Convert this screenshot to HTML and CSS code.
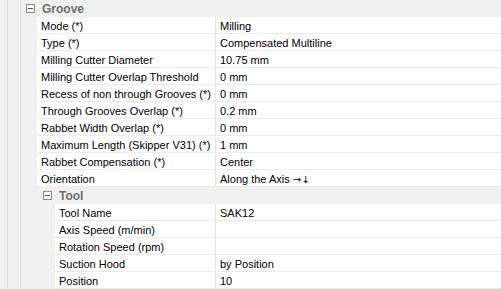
FILE: index.html
```html
<!DOCTYPE html>
<html lang="en">
<head>
    <meta charset="UTF-8">
    <title>Groove Properties</title>
    <link rel="stylesheet" href="styles.css">
</head>
<body>
    <div class="grid">
        <div class="guide">
            <div class="guide-inner">
                <div class="category">
                    <span class="toggle"></span>
                    <span class="category-name">Groove</span>
                </div>
                <div class="props">
                    <div class="row"><div class="label">Mode (*)</div><div class="value">Milling</div></div>
                    <div class="row"><div class="label">Type (*)</div><div class="value">Compensated Multiline</div></div>
                    <div class="row"><div class="label">Milling Cutter Diameter</div><div class="value">10.75 mm</div></div>
                    <div class="row"><div class="label">Milling Cutter Overlap Threshold</div><div class="value">0 mm</div></div>
                    <div class="row"><div class="label">Recess of non through Grooves (*)</div><div class="value">0 mm</div></div>
                    <div class="row"><div class="label">Through Grooves Overlap (*)</div><div class="value">0.2 mm</div></div>
                    <div class="row"><div class="label">Rabbet Width Overlap (*)</div><div class="value">0 mm</div></div>
                    <div class="row"><div class="label">Maximum Length (Skipper V31) (*)</div><div class="value">1 mm</div></div>
                    <div class="row"><div class="label">Rabbet Compensation (*)</div><div class="value">Center</div></div>
                    <div class="row"><div class="label">Orientation</div><div class="value">Along the Axis <span class="arrows">&rarr;&darr;</span></div></div>
                </div>
                <div class="sub">
                    <div class="category">
                        <span class="toggle"></span>
                        <span class="category-name">Tool</span>
                    </div>
                    <div class="props">
                        <div class="row"><div class="label">Tool Name</div><div class="value">SAK12</div></div>
                        <div class="row"><div class="label">Axis Speed (m/min)</div><div class="value"></div></div>
                        <div class="row"><div class="label">Rotation Speed (rpm)</div><div class="value"></div></div>
                        <div class="row"><div class="label">Suction Hood</div><div class="value">by Position</div></div>
                        <div class="row"><div class="label">Position</div><div class="value">10</div></div>
                    </div>
                </div>
            </div>
        </div>
    </div>
</body>
</html>
```

FILE: styles.css
```css
body {
    margin: 0;
    background-color: #f0f0f0;
    font-family: "Liberation Sans", Arial, sans-serif;
    font-size: 11px;
    color: #000;
    overflow: hidden;
}
.grid {
    width: 501px;
    height: 289px;
    padding-left: 7px;
    box-sizing: border-box;
}
.guide {
    border-left: 1px solid #dcdcdc;
    padding-left: 12px;
    height: 100%;
}
.guide-inner {
    border-left: 1px solid #dcdcdc;
    height: 100%;
}
.category {
    height: 17px;
    display: flex;
    align-items: center;
    padding-left: 5px;
}
.toggle {
    width: 7px;
    height: 7px;
    border: 1px solid #8c8c8c;
    background: #fafafa;
    position: relative;
    margin-right: 7px;
}
.toggle::after {
    content: "";
    position: absolute;
    left: 1px;
    top: 3px;
    width: 5px;
    height: 1px;
    background: #555;
}
.category-name {
    font-weight: bold;
    font-size: 12px;
    color: #6d6d6d;
    padding-top: 1px;
}
.props {
    background: #fff;
    margin-left: 16px;
}
.row {
    display: flex;
    height: 16px;
    border-bottom: 1px solid #ebebeb;
    line-height: 18px;
}
.label {
    width: 174px;
    padding-left: 4px;
    border-right: 1px solid #e4e4e4;
    white-space: nowrap;
    overflow: hidden;
}
.value {
    padding-left: 4px;
    white-space: nowrap;
}
.arrows {
    font-family: "DejaVu Sans", sans-serif;
    font-size: 10px;
}
.sub {
    margin-left: 16px;
}
.sub .category {
    padding-left: 6px;
}
.sub .props {
    margin-left: 18px;
}
.sub .label {
    width: 156px;
}
```
